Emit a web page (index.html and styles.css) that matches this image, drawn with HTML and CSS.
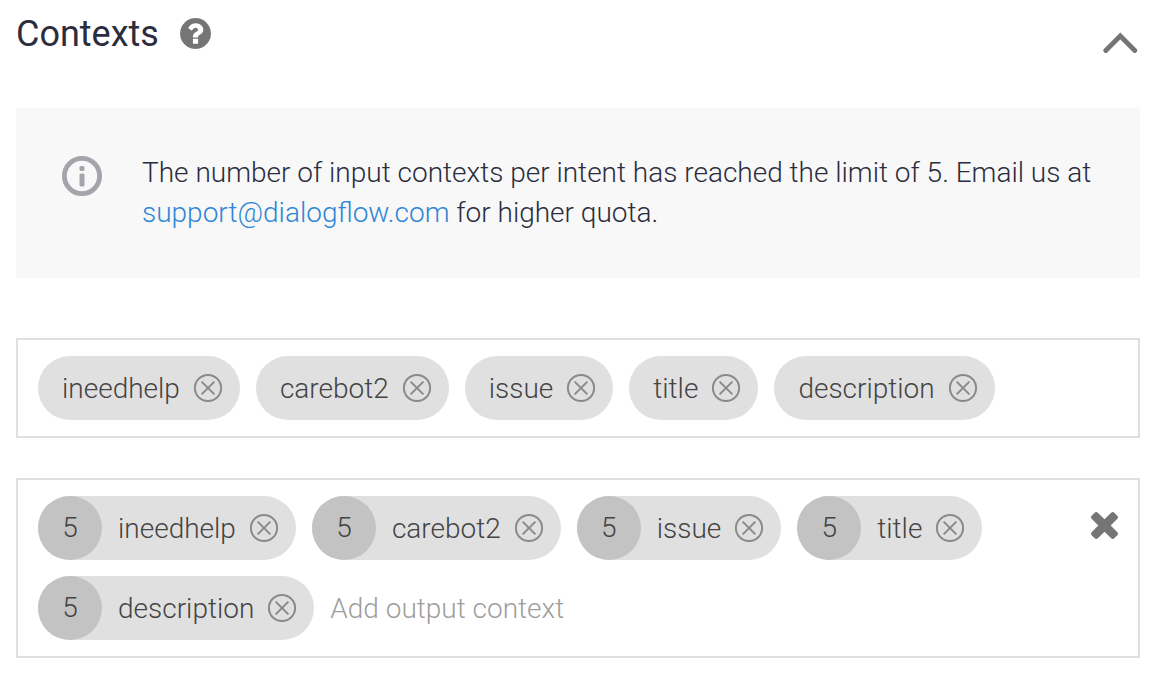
FILE: index.html
```
<!DOCTYPE html>
<html lang="en">
<head>
<meta charset="utf-8">
<title>Contexts</title>
<link rel="stylesheet" href="styles.css">
</head>
<body>
<svg class="defs" aria-hidden="true">
  <symbol id="remove" viewBox="0 0 32 32"><circle cx="16" cy="16" r="13.1" /><path d="M9.600 9.600l12.800 12.800M22.400 9.600L9.600 22.400" /></symbol>
</svg>
<main class="contexts">
  <header class="header">
    <h1 class="title">Contexts</h1>
    <button class="icon-button help" type="button" aria-label="Help">
      <svg width="31" height="31" viewBox="128 128 1536 1536" fill="#757575"><path d="M1024 1376v-192q0-14-9-23t-23-9h-192q-14 0-23 9t-9 23v192q0 14 9 23t23 9h192q14 0 23-9t9-23zm256-672q0-88-55.500-163t-138.500-116-170-41q-243 0-371 213-15 24 8 42l132 100q7 6 19 6 16 0 25-12 53-68 86-92 34-24 86-24 48 0 85.500 26t37.500 59q0 38-20 61t-68 45q-63 28-115.500 86.500t-52.500 125.500v36q0 14 9 23t23 9h192q14 0 23-9t9-23q0-19 21.500-49.500t54.500-49.500q32-18 49-28.500t46-35 44.500-48 28-60.500 12.500-81zm384 192q0 209-103 385.500t-279.500 279.500-385.500 103-385.500-103-279.500-279.500-103-385.500 103-385.500 279.500-279.500 385.500-103 385.500 103 279.500 279.500 103 385.500z"/></svg>
    </button>
    <button class="icon-button collapse" type="button" aria-label="Collapse">
      <svg width="36" height="24" viewBox="0 0 36 24"><path d="M3.800 18.500L18.300 4L32.800 18.500" fill="none" stroke="#757575" stroke-width="4.800" stroke-linecap="round"/></svg>
    </button>
  </header>
  <section class="notice">
    <svg class="notice-icon" width="40" height="40" viewBox="0 0 40 40"><circle cx="20" cy="20" r="17.600" fill="none" stroke="#a5a4ab" stroke-width="4.800"/><rect x="17.500" y="17.500" width="5" height="13" rx="1.500" fill="#a5a4ab"/><rect x="17.500" y="10" width="5" height="5" rx="1.500" fill="#a5a4ab"/></svg>
    <p class="notice-text">The number of input contexts per intent has reached the limit of 5. Email us at <a class="link" href="mailto:support@dialogflow.com">support@dialogflow.com</a> for higher quota.</p>
  </section>
  <section class="field" aria-label="Input contexts">
    <ul class="chips">
      <li class="chip"><span>ineedhelp</span><button class="icon-button remove" type="button" aria-label="Remove ineedhelp"><svg><use href="#remove"/></svg></button></li>
      <li class="chip"><span>carebot2</span><button class="icon-button remove" type="button" aria-label="Remove carebot2"><svg><use href="#remove"/></svg></button></li>
      <li class="chip"><span>issue</span><button class="icon-button remove" type="button" aria-label="Remove issue"><svg><use href="#remove"/></svg></button></li>
      <li class="chip"><span>title</span><button class="icon-button remove" type="button" aria-label="Remove title"><svg><use href="#remove"/></svg></button></li>
      <li class="chip"><span>description</span><button class="icon-button remove" type="button" aria-label="Remove description"><svg><use href="#remove"/></svg></button></li>
    </ul>
  </section>
  <section class="field" aria-label="Output contexts">
    <ul class="chips">
      <li class="chip counted"><span class="count">5</span><span>ineedhelp</span><button class="icon-button remove" type="button" aria-label="Remove ineedhelp"><svg><use href="#remove"/></svg></button></li>
      <li class="chip counted"><span class="count">5</span><span>carebot2</span><button class="icon-button remove" type="button" aria-label="Remove carebot2"><svg><use href="#remove"/></svg></button></li>
      <li class="chip counted"><span class="count">5</span><span>issue</span><button class="icon-button remove" type="button" aria-label="Remove issue"><svg><use href="#remove"/></svg></button></li>
      <li class="chip counted"><span class="count">5</span><span>title</span><button class="icon-button remove" type="button" aria-label="Remove title"><svg><use href="#remove"/></svg></button></li>
      <li class="chip counted"><span class="count">5</span><span>description</span><button class="icon-button remove" type="button" aria-label="Remove description"><svg><use href="#remove"/></svg></button></li>
      <li class="entry"><input class="input" type="text" placeholder="Add output context" aria-label="Add output context"></li>
    </ul>
    <button class="icon-button clear" type="button" aria-label="Clear output contexts">
      <svg width="27" height="27" viewBox="302 366 1188 1188" fill="#757575"><path d="M1490 1322q0 40-28 68l-136 136q-28 28-68 28t-68-28l-294-294-294 294q-28 28-68 28t-68-28l-136-136q-28-28-28-68t28-68l294-294-294-294q-28-28-28-68t28-68l136-136q28-28 68-28t68 28l294 294 294-294q28-28 68-28t68 28l136 136q28 28 28 68t-28 68l-294 294 294 294q28 28 28 68z"/></svg>
    </button>
  </section>
</main>
</body>
</html>
```
FILE: styles.css
```
* { box-sizing: border-box; }
body {
  margin: 0;
  background: #fff;
  color: #2b2d3e;
  font-family: Roboto, "Open Sans", sans-serif;
  font-size: 28px;
  font-weight: 300;
}
.defs { display: none; }
.contexts { padding: 8px 20px 20px 16px; }
.header {
  display: flex;
  align-items: flex-start;
  height: 100px;
}
.title {
  margin: 0 21px 0 0;
  font-size: 36px;
  font-weight: 400;
  line-height: 52px;
}
.icon-button {
  display: block;
  flex: none;
  padding: 0;
  border: 0;
  background: none;
  cursor: pointer;
}
.icon-button svg { display: block; }
.help { margin-top: 10px; }
.collapse { margin: 24px 2px 0 auto; }
.notice {
  display: flex;
  gap: 40px;
  margin-bottom: 60px;
  padding: 45px 46px;
  background: #f8f8f8;
}
.notice-icon { flex: none; margin-top: 3px; }
.notice-text { margin: 0; line-height: 40px; }
.link { color: #2e86d6; text-decoration: none; }
.field {
  display: flex;
  align-items: flex-start;
  padding: 16px 20px;
  border: 2px solid #e0e0e0;
}
.field + .field { margin-top: 40px; }
.chips {
  display: flex;
  flex: 1;
  flex-wrap: wrap;
  gap: 16px;
  margin: 0;
  padding: 0;
  list-style: none;
}
.chip {
  display: flex;
  align-items: center;
  height: 64px;
  padding: 0 16px 0 24px;
  border-radius: 32px;
  background: #e0e0e0;
  color: #444;
}
.counted { padding-left: 0; }
.count {
  width: 64px;
  margin-right: 16px;
  border-radius: 50%;
  background: #c3c3c3;
  line-height: 64px;
  text-align: center;
}
.remove { margin-left: 12px; }
.remove svg {
  width: 32px;
  height: 32px;
  fill: none;
  stroke: #8a8a8a;
  stroke-width: 2;
}
.input {
  width: 320px;
  height: 64px;
  padding: 0;
  border: 0;
  outline: 0;
  background: none;
  color: #444;
  font: inherit;
}
.input::placeholder { color: #9e9e9e; }
.clear { margin-top: 16px; }
```
